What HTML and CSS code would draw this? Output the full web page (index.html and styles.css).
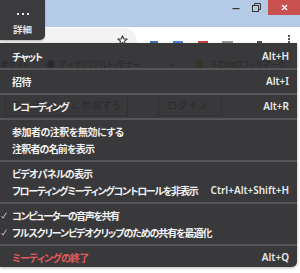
FILE: index.html
```html
<!DOCTYPE html>
<html lang="ja">
<head>
<meta charset="utf-8">
<link rel="stylesheet" href="styles.css">
</head>
<body>
<div class="window">
  <div class="titlebar">
    <div class="winctl">
      <span class="wbtn min"><svg width="8" height="8" viewBox="0 0 8 8"><rect x="0.5" y="4" width="7" height="1.2" fill="#333"/></svg></span>
      <span class="wbtn restore"><svg width="9" height="9" viewBox="0 0 9 9"><path d="M2.5 2.5V0.5H8.5V6.5H6.5" fill="none" stroke="#333" stroke-width="1"/><rect x="0.5" y="2.5" width="6" height="6" fill="none" stroke="#333" stroke-width="1"/></svg></span>
      <span class="wbtn close"><svg width="7" height="7" viewBox="0 0 7 7"><path d="M1 1L6 6M6 1L1 6" stroke="#fff" stroke-width="1.3"/></svg></span>
    </div>
  </div>
  <div class="toolbar">
    <div class="omnibox">
      <svg class="star" width="11" height="11" viewBox="0 0 11 11"><path d="M5.5 0.8L6.9 4H10.2L7.5 6.1L8.5 9.6L5.5 7.5L2.5 9.6L3.5 6.1L0.8 4H4.1Z" fill="none" stroke="#444" stroke-width="1.1" stroke-linejoin="round"/></svg>
    </div>
    <span class="peek p1"></span>
    <span class="peek p2"></span>
    <span class="peek p3"></span>
    <span class="peek p4"></span>
    <span class="peek p5"></span>
    <span class="kebab"><i></i><i></i><i></i></span>
  </div>
  <div class="page">
    <div class="bookmarks">
      <span class="bm bm-first">者サイト</span>
      <span class="bm bm-idea"><span class="ico-cloud"></span>アイデア（アルト・テナー</span>
      <span class="bm bm-more">»</span>
      <span class="bm bm-other"><span class="ico-folder"></span>その他のブックマーク</span>
    </div>
    <div class="actions">
      <span class="pbtn join">ミーティングに参加する</span>
      <span class="pbtn login">ログイン</span>
    </div>
  </div>
</div>

<div class="more-btn">
  <span class="dots"><i></i><i></i><i></i></span>
  <span class="more-label">詳細</span>
</div>

<div class="menu">
  <div class="item"><span class="chk"></span><span class="label ls2">チャット</span><span class="key">Alt+H</span></div>
  <div class="sep"></div>
  <div class="item"><span class="chk"></span><span class="label">招待</span><span class="key">Alt+I</span></div>
  <div class="sep"></div>
  <div class="item"><span class="chk"></span><span class="label ls2">レコーディング</span><span class="key">Alt+R</span></div>
  <div class="sep"></div>
  <div class="item"><span class="chk"></span><span class="label">参加者の注釈を無効にする</span></div>
  <div class="item"><span class="chk"></span><span class="label ls1">注釈者の名前を表示</span></div>
  <div class="sep"></div>
  <div class="item"><span class="chk"></span><span class="label ls1">ビデオパネルの表示</span></div>
  <div class="item"><span class="chk"></span><span class="label ls3">フローティングミーティングコントロールを非表示</span><span class="key">Ctrl+Alt+Shift+H</span></div>
  <div class="sep"></div>
  <div class="item"><span class="chk"><svg width="6" height="7" viewBox="0 0 6 7"><path d="M0.6 4.2L2 6.2L5.4 0.6" fill="none" stroke="#d0d0d0" stroke-width="0.9"/></svg></span><span class="label ls4">コンピューターの音声を共有</span></div>
  <div class="item"><span class="chk"><svg width="6" height="7" viewBox="0 0 6 7"><path d="M0.6 4.2L2 6.2L5.4 0.6" fill="none" stroke="#d0d0d0" stroke-width="0.9"/></svg></span><span class="label ls2">フルスクリーンビデオクリップのための共有を最適化</span></div>
  <div class="sep"></div>
  <div class="item danger"><span class="chk"></span><span class="label ls1">ミーティングの終了</span><span class="key">Alt+Q</span></div>
</div>
</body>
</html>
```

FILE: styles.css
```css
* {
  box-sizing: border-box;
  margin: 0;
  padding: 0;
}

html,
body {
  width: 300px;
  height: 273px;
  overflow: hidden;
}

body {
  position: relative;
  background: #f2f2f2;
  font-family: "Noto Sans CJK JP", "Noto Sans", sans-serif;
}

/* ---------- browser behind ---------- */
.window {
  display: flex;
  flex-direction: column;
  height: 273px;
}

.titlebar {
  height: 27px;
  flex: 0 0 27px;
  background: #b3cbe7;
  display: flex;
  justify-content: flex-end;
}

.winctl {
  display: flex;
  align-items: flex-start;
}

.wbtn {
  display: flex;
  align-items: center;
  justify-content: center;
  height: 15px;
}

.min {
  width: 20px;
}

.restore {
  width: 20px;
  margin-right: 2px;
}

.close {
  width: 32px;
  background: #c8514f;
}

.toolbar {
  height: 16px;
  flex: 0 0 16px;
  background: #ffffff;
  display: flex;
  align-items: flex-end;
  overflow: hidden;
}

.omnibox {
  align-self: flex-start;
  flex: 0 0 137px;
  height: 28px;
  margin-top: 1px;
  background: #f3f3f4;
  border-radius: 0 14px 14px 0;
  display: flex;
  justify-content: flex-end;
  padding: 7px 9px 0 0;
}

.star {
  display: block;
}

.peek {
  height: 2px;
  display: block;
}

.p1 { width: 8px; margin-left: 13px; background: #3f6fb8; }
.p2 { width: 10px; margin-left: 15px; background: #4f86d3; }
.p3 { width: 10px; margin-left: 15px; background: #c0443f; }
.p4 { width: 11px; margin-left: 14px; background: #9a9a9a; }
.p5 { width: 5px; margin-left: 24px; background: #555555; }

.kebab {
  align-self: flex-start;
  margin-left: 26px;
  margin-top: 8px;
  display: flex;
  flex-direction: column;
  gap: 1px;
}

.kebab i {
  display: block;
  width: 2px;
  height: 2px;
  background: #555;
}

.page {
  flex: 1;
  background: #ffffff;
  display: flex;
  flex-direction: column;
  overflow: hidden;
}

.bookmarks {
  margin-top: 14px;
  height: 14px;
  display: flex;
  align-items: center;
  font-size: 9px;
  letter-spacing: -0.8px;
  color: #6a6a6a;
  white-space: nowrap;
  font-feature-settings: "palt";
}

.bm {
  display: flex;
  align-items: center;
}

.bm-idea {
  margin-left: 18px;
}

.ico-cloud {
  width: 8px;
  height: 8px;
  border-radius: 50%;
  background: #6a6a6a;
  margin-right: 4px;
}

.bm-more {
  margin-left: 30px;
}

.bm-other {
  margin-left: 22px;
}

.ico-folder {
  width: 7px;
  height: 8px;
  background: #d8b24a;
  margin-right: 7px;
}

.actions {
  margin-top: 22px;
  display: flex;
  align-items: center;
  font-size: 10px;
  color: #6a6a6a;
  white-space: nowrap;
}

.pbtn {
  border: 1px solid #a0a0a0;
  padding: 3px 6px;
}

.join {
  margin-left: 5px;
}

.login {
  margin-left: 30px;
  padding: 3px 14px 3px 8px;
}

/* ---------- overlay ---------- */
.more-btn {
  position: absolute;
  left: 0;
  top: 0;
  width: 45px;
  height: 40px;
  background: #3b3b3d;
  border-bottom-right-radius: 5px;
  display: flex;
  flex-direction: column;
  align-items: center;
  padding-top: 13px;
  box-shadow: 0 1px 2px rgba(0, 0, 0, 0.25);
}

.dots {
  display: flex;
  gap: 3px;
}

.dots i {
  display: block;
  width: 2px;
  height: 2px;
  background: #ececec;
}

.more-label {
  margin-top: 9px;
  font-size: 9.5px;
  line-height: 10px;
  font-weight: 600;
  color: #e2e2e2;
}

.menu {
  position: absolute;
  left: 0;
  top: 43px;
  width: 297px;
  height: 224px;
  background: rgba(36, 36, 38, 0.9);
  border-bottom-right-radius: 5px;
  padding-top: 4.5px;
  box-shadow: 0 1px 3px rgba(0, 0, 0, 0.3);
  display: flex;
  flex-direction: column;
}

.item {
  height: 17px;
  display: flex;
  align-items: center;
  padding-right: 8px;
  color: #f2f2f2;
  white-space: nowrap;
}

.chk {
  flex: 0 0 12px;
  display: flex;
  align-items: center;
  padding-left: 1px;
}

.chk svg {
  display: block;
}

.label {
  flex: 0 1 auto;
  min-width: 0;
  font-size: 10px;
  line-height: 17px;
  font-weight: 600;
  letter-spacing: -0.5px;
  font-feature-settings: "palt";
}

.label.ls1 {
  letter-spacing: -0.8px;
}

.label.ls2 {
  letter-spacing: -1.1px;
}

.label.ls3 {
  letter-spacing: -1.25px;
}

.label.ls4 {
  letter-spacing: -1.4px;
}

.key {
  margin-left: auto;
  padding-left: 8px;
  font-family: "Noto Sans", sans-serif;
  font-size: 10px;
  font-weight: 600;
  color: #eaeaea;
}

.danger .label {
  color: #e45b5b;
}

.sep {
  height: 2px;
  margin: 3px 0;
  background: #565658;
}
```
